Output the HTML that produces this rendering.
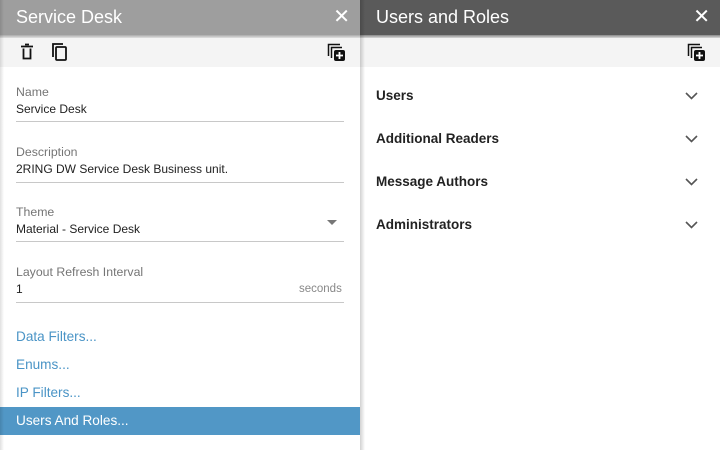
<!DOCTYPE html>
<html><head><meta charset="utf-8"><style>
*{margin:0;padding:0;box-sizing:border-box}
body{width:720px;height:450px;overflow:hidden;background:#fff;font-family:"Liberation Sans",Arial,sans-serif;position:relative}
.hdr{position:absolute;top:0;height:35px;color:#fff;font-size:18px;line-height:35px;padding-left:16px}
.hdr .x{position:absolute;right:10px;top:0;font-size:20px}
.tb{position:absolute;top:38px;height:29px;background:#f4f4f4}
.lbl{position:absolute;left:16px;font-size:12.3px;color:#757575}
.val{position:absolute;left:16px;font-size:12px;color:#222}
.line{position:absolute;left:16px;width:328px;height:1px;background:#c8c8c8}
.lnk{position:absolute;left:16px;font-size:13.6px;color:#4a94c6}
.acc{position:absolute;left:376px;font-size:13.5px;font-weight:bold;color:#222}
.chev{position:absolute;left:685px}
</style></head><body>
<div class="hdr" style="left:0;width:360px;background:#9e9e9e">Service Desk<span class="x">✕</span></div>
<div style="position:absolute;left:0;top:35px;width:360px;height:4px;background:linear-gradient(#aaa,#f4f4f4)"></div>
<div class="hdr" style="left:360px;width:360px;background:#5a5a5a">Users and Roles<span class="x">✕</span></div>
<div style="position:absolute;left:360px;top:35px;width:360px;height:4px;background:linear-gradient(#888,#f4f4f4)"></div>
<div class="tb" style="left:0;width:360px"></div>
<div class="tb" style="left:360px;width:360px"></div>
<svg style="position:absolute;left:19px;top:43px" width="16" height="18" viewBox="0 0 16 18"><path d="M2 3.5h12M6 1.5h4" fill="none" stroke="#111" stroke-width="1.8"/><path d="M4.5 5.5v10h7v-10" fill="none" stroke="#111" stroke-width="1.8"/></svg>
<svg style="position:absolute;left:50px;top:42px" width="20" height="20" viewBox="0 0 20 20"><path d="M3 15V2h10" fill="none" stroke="#111" stroke-width="1.8"/><rect x="6" y="5" width="10" height="13" rx="1" fill="none" stroke="#111" stroke-width="1.8"/></svg>
<svg style="position:absolute;left:327px;top:43px" width="20" height="20" viewBox="0 0 20 20"><path d="M1.5 13V1.5H13M4.5 15V4.5H15" fill="none" stroke="#111" stroke-width="1.5"/><rect x="7" y="7" width="11" height="11" rx="2" fill="#111"/><path d="M12.5 9v7M9 12.5h7" stroke="#fff" stroke-width="1.8"/></svg>
<svg style="position:absolute;left:687px;top:43px" width="20" height="20" viewBox="0 0 20 20"><path d="M1.5 13V1.5H13M4.5 15V4.5H15" fill="none" stroke="#111" stroke-width="1.5"/><rect x="7" y="7" width="11" height="11" rx="2" fill="#111"/><path d="M12.5 9v7M9 12.5h7" stroke="#fff" stroke-width="1.8"/></svg>
<div class="lbl" style="top:85px">Name</div>
<div class="val" style="top:102px">Service Desk</div>
<div class="line" style="top:121px"></div>
<div class="lbl" style="top:145px">Description</div>
<div class="val" style="top:162px">2RING DW Service Desk Business unit.</div>
<div class="line" style="top:182px"></div>
<div class="lbl" style="top:205px">Theme</div>
<div class="val" style="top:222px">Material - Service Desk</div>
<svg style="position:absolute;left:327px;top:220px" width="10" height="6"><path d="M0 0h10L5 5z" fill="#777"/></svg>
<div class="line" style="top:241px"></div>
<div class="lbl" style="top:265px">Layout Refresh Interval</div>
<div class="val" style="top:282px">1</div>
<div class="lbl" style="top:283px;left:299px;font-size:11.5px;color:#888">seconds</div>
<div class="line" style="top:302px"></div>
<div class="lnk" style="top:329px">Data Filters...</div>
<div class="lnk" style="top:357px">Enums...</div>
<div class="lnk" style="top:385px">IP Filters...</div>
<div style="position:absolute;left:0;top:407px;width:360px;height:28px;background:#5197c6"></div>
<div class="lnk" style="top:413px;color:#fff">Users And Roles...</div>
<div style="position:absolute;left:0;top:0;width:4px;height:450px;background:linear-gradient(90deg,rgba(0,0,0,.12),rgba(0,0,0,0))"></div>
<div style="position:absolute;left:360px;top:0;width:5px;height:450px;background:linear-gradient(90deg,rgba(0,0,0,.18),rgba(0,0,0,0))"></div>
<div class="acc" style="top:88px">Users</div>
<div class="acc" style="top:131px">Additional Readers</div>
<div class="acc" style="top:174px">Message Authors</div>
<div class="acc" style="top:217px">Administrators</div>
<svg class="chev" style="top:92px" width="13" height="8"><path d="M1 1l5.5 5.5L12 1" fill="none" stroke="#555" stroke-width="1.6"/></svg>
<svg class="chev" style="top:135px" width="13" height="8"><path d="M1 1l5.5 5.5L12 1" fill="none" stroke="#555" stroke-width="1.6"/></svg>
<svg class="chev" style="top:178px" width="13" height="8"><path d="M1 1l5.5 5.5L12 1" fill="none" stroke="#555" stroke-width="1.6"/></svg>
<svg class="chev" style="top:221px" width="13" height="8"><path d="M1 1l5.5 5.5L12 1" fill="none" stroke="#555" stroke-width="1.6"/></svg>
</body></html>
